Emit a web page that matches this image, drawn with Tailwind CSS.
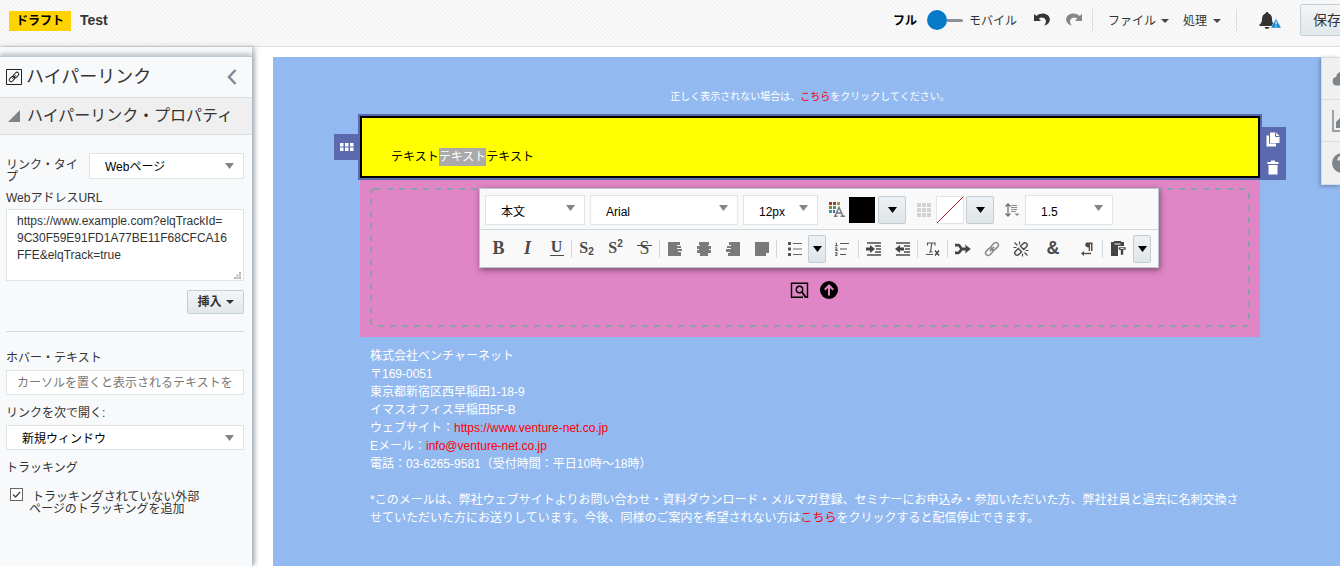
<!DOCTYPE html>
<html lang="ja">
<head>
<meta charset="utf-8">
<title>Test</title>
<script src="https://cdn.jsdelivr.net/npm/@tailwindcss/browser@4"></script>
</head>
<body class="flex h-screen flex-col overflow-hidden bg-white font-['Liberation_Sans','Noto_Sans_CJK_JP',sans-serif] text-xs text-[#333]">

<header class="flex h-[47px] shrink-0 items-center overflow-hidden border-b border-[#d6dfe6] bg-[repeating-linear-gradient(45deg,#fafafa_0px,#fafafa_1px,#f1f1f1_2px,#fafafa_3px)] pl-[9px]">
  <span class="mb-1 flex h-5 w-[62px] shrink-0 items-center justify-center bg-[#ffd200] font-bold text-black">ドラフト</span>
  <h1 class="mb-1.5 ml-[9px] text-sm font-bold">Test</h1>
  <div class="ml-auto flex shrink-0 items-center pb-1.5">
    <label for="view" class="pt-0.5 font-bold text-black">フル</label>
    <button id="view" type="button" aria-label="表示切替" class="ml-2.5 flex w-9 items-center"><span class="size-5 rounded-full bg-[#0679c8]"></span><span class="h-[3px] flex-1 rounded-r bg-[#8b9399]"></span></button>
    <span class="ml-1.5 pt-0.5">モバイル</span>
    <button type="button" aria-label="元に戻す" class="ml-[17px]"><svg class="h-3.5 w-4" viewBox="0 0 16 14"><path d="M0 1v7h7L4.800 5.800C7.200 3.600 11 4.300 11.800 7.500c.4 1.900-.3 3.600-1.600 5C14 11.500 16 9 15.800 6 15.300 1 8-1.800 2.500 3z" fill="#333"/></svg></button>
    <button type="button" aria-label="やり直し" class="ml-4"><svg class="h-3.5 w-4" viewBox="0 0 16 14"><path d="M16 1v7H9l2.200-2.200C8.800 3.600 5 4.300 4.200 7.500c-.4 1.900.3 3.600 1.600 5C2 11.500 0 9 .2 6 .7 1 8-1.800 13.500 3z" fill="#858585"/></svg></button>
    <span class="ml-2.5 h-[22px] w-px bg-[#d6dfe6]"></span>
    <button type="button" class="ml-[15px] flex items-center gap-[5px] pt-0.5">ファイル<svg class="h-1 w-2" viewBox="0 0 8 4"><path d="M0 0h8L4 4z" fill="#444"/></svg></button>
    <button type="button" class="ml-[14px] flex items-center gap-1.5 pt-0.5">処理<svg class="h-1 w-2" viewBox="0 0 8 4"><path d="M0 0h8L4 4z" fill="#444"/></svg></button>
    <span class="ml-[15px] h-[22px] w-px bg-[#d6dfe6]"></span>
    <button type="button" aria-label="通知" class="ml-[22px]"><svg class="h-[17px] w-[22px]" viewBox="0 0 22 17"><path d="M8 0c1 0 1.200.6 1.200 1.200C12 2 13 4.500 13 7c0 3 1 4.500 2.500 5.500v1.500H.5v-1.500C2 11.500 3 10 3 7c0-2.500 1-5 3.800-5.800C6.800.6 7 0 8 0zM5.500 15h5c-.5 2.500-4.500 2.500-5 0z" fill="#333"/><path d="M17 6.500 22.300 16h-10.600z" fill="#0a8ad8" stroke="#fff" stroke-width=".5"/><path d="M16.500 9.500h1.200v3h-1.200zM16.500 13.500h1.200v1.200h-1.200z" fill="#fff"/></svg></button>
    <button type="button" class="-mr-3.5 ml-[19px] h-8 rounded-xs border border-[#c4ced7] bg-linear-to-b from-[#f3f5f6] to-[#e2e7ea] px-3 text-sm">保存</button>
  </div>
</header>

<div class="flex min-h-0 flex-1">
  <aside class="relative z-10 flex w-[253px] shrink-0 flex-col border-r border-[#c4d2de] bg-[#f7f9fb] pt-[9px] shadow-[2px_0_5px_rgba(0,0,0,0.25)]">
    <div class="flex flex-1 flex-col border-t border-[#bccad6] bg-[#f8f9fb] shadow-[0_-2px_5px_rgba(0,0,0,0.25)]">
      <div class="flex h-10 items-center pl-1.5 pr-[15px]">
        <svg class="size-4" viewBox="0 0 16 16" fill="none" stroke="#222"><path d="M.5.5h15v15H.5z"/><g transform="rotate(-45 8 8)"><rect x="2" y="6.200" width="6.500" height="3.600" rx="1.800"/><rect x="7.500" y="6.200" width="6.500" height="3.600" rx="1.800"/><path d="M5.500 8h5"/></g></svg>
        <h2 class="ml-1 text-lg leading-6">ハイパーリンク</h2>
        <button type="button" aria-label="閉じる" class="ml-auto"><svg class="h-4 w-2.5" viewBox="0 0 10 16" fill="none" stroke="#7e8a94" stroke-width="2.500"><path d="M8.500 1 2 8l6.500 7"/></svg></button>
      </div>
      <button type="button" class="flex h-[38px] shrink-0 items-center border-y border-[#d6dfe6] bg-[#efefef] pl-2 text-base">
        <svg class="mr-[7px] h-3 w-3" viewBox="0 0 12 12"><path d="M12 0v12H0z" fill="#7d8489"/></svg>ハイパーリンク・プロパティ
      </button>

      <div class="flex flex-col pl-1.5 pr-2 pt-[18px]">
        <div class="flex h-[26px]">
          <label for="type" class="w-[83px] shrink-0 break-all pr-2 pt-1.5 leading-3">リンク・タイプ</label>
          <div class="relative flex-1">
            <select id="type" class="block h-[26px] w-full appearance-none border border-[#dfe4e7] bg-white pl-[15px] pt-0.5 text-black"><option>Webページ</option></select>
            <svg class="pointer-events-none absolute right-2.5 top-2.5 h-1.5 w-[9px]" viewBox="0 0 9 6"><path d="M0 0h9L4.500 6z" fill="#80868b"/></svg>
          </div>
        </div>
        <label for="url" class="mt-2.5 leading-[18px]">WebアドレスURL</label>
        <div class="relative mt-0.5 flex">
          <textarea id="url" class="h-[72px] w-full resize-none overflow-hidden border border-[#dfe4e7] bg-white px-2.5 py-[3px] leading-[17px]">https://www.example.com?elqTrackId=
9C30F59E91FD1A77BE11F68CFCA16
FFE&amp;elqTrack=true</textarea>
          <svg class="pointer-events-none absolute bottom-0.5 right-[3px] size-[7px]" viewBox="0 0 7 7" fill="#b5b5b5"><path d="M0 5h2v2H0zM2.500 5h2v2h-2zM5 5h2v2H5zM2.500 2.500h2v2h-2zM5 2.500h2v2H5zM5 0h2v2H5z"/></svg>
        </div>
        <button type="button" class="mt-[9px] flex h-6 w-[57px] items-center justify-center gap-1 self-end rounded-xs border border-[#c4ced7] bg-linear-to-b from-[#f3f5f6] to-[#e2e7ea] font-bold">挿入<svg class="h-1 w-2" viewBox="0 0 8 4"><path d="M0 0h8L4 4z" fill="#333"/></svg></button>
        <hr class="mt-[17px] border-[#d5dade]">
        <label for="hover" class="mt-[17px] leading-[18px]">ホバー・テキスト</label>
        <input id="hover" type="text" placeholder="カーソルを置くと表示されるテキストを" class="mt-[3px] h-[25px] w-full border border-[#dfe4e7] bg-white px-2.5 placeholder:text-[#777]">
        <label for="open" class="mt-[9px] leading-[18px]">リンクを次で開く:</label>
        <div class="relative mt-[3px]">
          <select id="open" class="block h-[25px] w-full appearance-none border border-[#dfe4e7] bg-white pl-[15px] pt-0.5 text-black"><option>新規ウィンドウ</option></select>
          <svg class="pointer-events-none absolute right-2.5 top-2.5 h-1.5 w-[9px]" viewBox="0 0 9 6"><path d="M0 0h9L4.500 6z" fill="#80868b"/></svg>
        </div>
        <span class="mt-[9px] leading-[18px]">トラッキング</span>
        <div class="mt-[11px] flex pl-1">
          <span class="relative size-[13px]">
            <input id="track" type="checkbox" checked class="block size-[13px] appearance-none border border-[#666] bg-white">
            <svg class="pointer-events-none absolute left-0 top-0 size-[13px]" viewBox="0 0 13 13" fill="none" stroke="#444" stroke-width="1.300"><path d="m3 6.500 2.500 2.500L10.200 4"/></svg>
          </span>
          <label for="track" class="ml-1.5 pt-[3px] indent-[3px] leading-3">トラッキングされていない外部<br>ページのトラッキングを追加</label>
        </div>
      </div>
    </div>
  </aside>

  <main class="relative min-w-0 flex-1 overflow-hidden pl-5 pt-2.5">
    <div class="-mr-[7px] h-full bg-[#92b9f0] pt-[31px]">
      <div class="mx-auto w-[900px] max-w-full">
        <p class="text-center text-[10px] leading-[18px] text-white">正しく表示されない場合は、<a href="#" class="text-[#f00]">こちら</a>をクリックしてください。</p>

        <section class="relative z-10 mt-2.5 border-2 border-black bg-[#ff0] px-[29px] pb-2.5 pt-[30px] text-black outline-2 outline-[#5b6aae]">
          <p class="leading-[18px]">テキスト<mark class="inline-block bg-[#aaa] text-white">テキスト</mark>テキスト</p>
          <button type="button" aria-label="移動" class="absolute -left-7 top-4 flex h-[26px] w-[26px] items-center justify-center bg-[#5b6aae]"><svg class="h-2 w-3.5" viewBox="0 0 14 8" fill="#fff"><path d="M0 0h3.500v3.500H0zM5 0h3.500v3.500H5zM10 0h3.500v3.500H10zM0 4.500h3.500V8H0zM5 4.500h3.500V8H5zM10 4.500h3.500V8H10z"/></svg></button>
          <div class="absolute -right-7 -bottom-1 flex h-[53px] w-[26px] flex-col items-center justify-between bg-[#5b6aae] py-[5px]">
            <button type="button" aria-label="複製"><svg class="block h-[15px] w-3.5" viewBox="0 0 14 15"><path d="M.5 3.500H3v8h7v3H.5z" fill="#fff"/><path d="M4 .5h6L13.500 4v7H4z" fill="#fff"/><path d="M9.500.5V4.500h4" fill="none" stroke="#5b6aae"/></svg></button>
            <button type="button" aria-label="削除"><svg class="block h-[15px] w-3" viewBox="0 0 12 15" fill="#fff"><path d="M.5 2h3.500V.5h4V2h3.500v2H.5zM1.500 5h9v9.500h-9z"/></svg></button>
          </div>
        </section>

        <section class="relative h-[159px] bg-[#e085c5] px-2.5 pb-2.5 pt-2.5">
          <div class="relative flex h-full items-end justify-center pb-7 pl-2">
            <svg class="absolute inset-0 h-full w-full" fill="none" stroke="#8d9fa9" stroke-width="2" stroke-dasharray="6 6"><rect x="1" y="1" rx="4" class="h-[calc(100%-2px)] w-[calc(100%-2px)]"/></svg>
            <div class="relative flex items-center gap-[11px]">
              <button type="button" aria-label="参照"><svg class="block h-[17px] w-[19px]" viewBox="0 0 19 17" fill="none" stroke="#000" stroke-width="1.400"><path d="M13 15.300H1.500V1.300h16v14H16"/><circle cx="9.500" cy="7.500" r="3.200"/><path d="m11.800 9.800 4 5.700" stroke-width="2"/></svg></button>
              <button type="button" aria-label="アップロード"><svg class="block size-[18px]" viewBox="0 0 18 18"><circle cx="9" cy="9" r="9"/><path d="M9 14.500V5M4.800 8.800 9 4.500l4.200 4.300" fill="none" stroke="#e085c5" stroke-width="2"/></svg></button>
            </div>
          </div>

          <div role="toolbar" aria-label="書式" class="absolute left-[119px] top-2.5 z-20 w-[680px] border border-[#b9c8d4] bg-[#f9f9f9] shadow-[1px_2px_6px_rgba(0,0,0,0.45)]">
            <div class="flex h-10 items-center pl-[5px] pt-px">
              <div class="relative w-[100px]"><select aria-label="段落" class="block h-[30px] w-full appearance-none border border-[#dfe4e7] bg-white pl-[15px] pt-1 text-black"><option>本文</option></select><svg class="pointer-events-none absolute right-2.5 top-2.5 h-1.5 w-[9px]" viewBox="0 0 9 6"><path d="M0 0h9L4.500 6z" fill="#80868b"/></svg></div>
              <div class="relative ml-[5px] w-[148px]"><select aria-label="フォント" class="block h-[30px] w-full appearance-none border border-[#dfe4e7] bg-white pl-[15px] pt-1 text-black"><option>Arial</option></select><svg class="pointer-events-none absolute right-2.5 top-2.5 h-1.5 w-[9px]" viewBox="0 0 9 6"><path d="M0 0h9L4.500 6z" fill="#80868b"/></svg></div>
              <div class="relative ml-[5px] w-[75px]"><select aria-label="サイズ" class="block h-[30px] w-full appearance-none border border-[#dfe4e7] bg-white pl-[15px] pt-1 text-black"><option>12px</option></select><svg class="pointer-events-none absolute right-2.5 top-2.5 h-1.5 w-[9px]" viewBox="0 0 9 6"><path d="M0 0h9L4.500 6z" fill="#80868b"/></svg></div>
              <svg class="ml-[11px] h-[15px] w-4" viewBox="0 0 16 15"><path d="M0 0h3v3H0z" fill="#a33"/><path d="M4 0h3v3H4z" fill="#a33b33"/><path d="M8 0h3v3H8z" fill="#9a9a3c"/><path d="M0 4h3v3H0z" fill="#7a8a30"/><path d="M4 4h3v3H4z" fill="#4f9a3c"/><path d="M0 8h3v3H0z" fill="#3a9aa0"/><path d="M4 8h2v3H4z" fill="#37b"/><path d="m6 14 4-8.500L14 14M7.500 11h5M5 14.300h3.500M11.500 14.300H16" fill="none" stroke="#777" stroke-width="1.400"/></svg>
              <button type="button" aria-label="文字色" class="ml-1 size-[26px] bg-black"></button>
              <button type="button" aria-label="文字色を選択" class="ml-[3px] flex h-7 w-7 items-center justify-center rounded-xs border border-[#c0ccd6] bg-linear-to-b from-[#eef1f3] to-[#e0e5e8]"><svg class="h-1.5 w-[9px]" viewBox="0 0 10 6" preserveAspectRatio="none"><path d="M0 0h10L5 6z"/></svg></button>
              <svg class="ml-[11px] h-3.5 w-3.5" viewBox="0 0 14 14" fill="#d3d3d3"><path d="M0 0h4v4H0zM5 0h4v4H5zM10 0h4v4h-4zM0 5h4v4H0zM5 5h4v4H5zM10 5h4v4h-4zM0 10h4v4H0zM5 10h4v4H5zM10 10h4v4h-4z"/></svg>
              <button type="button" aria-label="背景色" class="ml-[5px] size-7 border border-[#dfe4e7] bg-white"><svg class="block size-full" viewBox="0 0 26 26"><path d="M0 26 26 0" stroke="#d0112b"/></svg></button>
              <button type="button" aria-label="背景色を選択" class="ml-0.5 flex h-7 w-7 items-center justify-center rounded-xs border border-[#c0ccd6] bg-linear-to-b from-[#eef1f3] to-[#e0e5e8]"><svg class="h-1.5 w-[9px]" viewBox="0 0 10 6" preserveAspectRatio="none"><path d="M0 0h10L5 6z"/></svg></button>
              <svg class="ml-[11px] h-3.5 w-3.5" viewBox="0 0 14 14"><path d="M3 2v10M.5 3.500 3 1l2.500 2.500M.5 10.500 3 13l2.500-2.500" fill="none" stroke="#707070" stroke-width="1.300"/><path d="M6 2.500h6M6 4.500h6M6 6.500h6M6 8.500h5" stroke="#8a8a8a"/><path d="M9.500 10.500h5L12 13z" fill="#888"/></svg>
              <div class="relative ml-1.5 w-[88px]"><select aria-label="行の高さ" class="block h-[30px] w-full appearance-none border border-[#dfe4e7] bg-white pl-[15px] pt-1 text-black"><option>1.5</option></select><svg class="pointer-events-none absolute right-2.5 top-2.5 h-1.5 w-[9px]" viewBox="0 0 9 6"><path d="M0 0h9L4.500 6z" fill="#80868b"/></svg></div>
            </div>

            <div class="flex h-[38px] items-center border-t border-[#cfd9e1] pl-1 font-['Liberation_Serif'] text-lg font-bold leading-6 text-[#4a4a4a]">
              <button type="button" class="w-[29px] pb-0.5">B</button>
              <button type="button" class="w-[29px] pb-0.5 italic">I</button>
              <button type="button" aria-label="下線" class="flex w-[29px] justify-center"><span class="h-[15px] w-3.5 border-b border-[#4a4a4a] text-center text-base leading-3">U</span></button>
              <span class="h-[18px] w-px bg-[#cfd9e1]"></span>
              <button type="button" class="w-[29px] whitespace-nowrap pb-0.5 text-base">S<span class="align-[-2px] font-['Liberation_Sans'] text-[10px] leading-none">2</span></button>
              <button type="button" class="w-[29px] whitespace-nowrap pb-0.5 text-base">S<span class="align-[6px] font-['Liberation_Sans'] text-[10px] leading-none">2</span></button>
              <button type="button" aria-label="取り消し線" class="flex w-[29px] justify-center"><span class="relative pb-0.5 text-lg font-normal">S<span class="absolute -left-0.5 -right-0.5 top-[11px] h-px bg-[#4a4a4a]"></span></span></button>
              <span class="h-[18px] w-px bg-[#cfd9e1]"></span>
              <button type="button" aria-label="左揃え" class="flex w-[29px] justify-center"><svg class="size-3.5" viewBox="0 0 14 14" fill="#7a7a7a"><path d="M0 0h12v3H9v1h4v2H9v1h5v2h-4v1h3v4H0z"/></svg></button>
              <button type="button" aria-label="中央揃え" class="flex w-[29px] justify-center"><svg class="size-3.5" viewBox="0 0 14 14" fill="#7a7a7a"><path d="M2 0h10v3h-1v1h3v3h-2v1h2v3h-3v3H3v-3H0V8h2V7H0V4h3V3H2z"/></svg></button>
              <button type="button" aria-label="右揃え" class="flex w-[29px] justify-center"><svg class="size-3.5" viewBox="0 0 14 14" fill="#7a7a7a"><path d="M14 0H3v3h2v1H1v2h4v1H0v3h4v1H2v3h12z"/></svg></button>
              <button type="button" aria-label="両端揃え" class="flex w-[29px] justify-center"><svg class="size-3.5" viewBox="0 0 14 14" fill="#7a7a7a"><path d="M0 0h14v11h-3v3H0z"/></svg></button>
              <span class="h-[18px] w-px bg-[#cfd9e1]"></span>
              <button type="button" aria-label="箇条書き" class="flex w-[31px] justify-end pr-1.5"><svg class="size-3.5" viewBox="0 0 14 14"><path d="M5 1.500h9M5 7h9M5 12.500h9" stroke="#666"/><path d="M0 0h3v3H0zM0 5.500h3v3H0zM0 11h3v3H0z" fill="#555"/></svg></button>
              <button type="button" aria-label="箇条書きの種類" class="flex h-7 w-[18px] items-center justify-center rounded-xs border border-[#c0ccd6] bg-linear-to-b from-[#eef1f3] to-[#e0e5e8]"><svg class="h-1.5 w-[9px]" viewBox="0 0 10 6" preserveAspectRatio="none"><path d="M0 0h10L5 6z"/></svg></button>
              <button type="button" aria-label="番号付きリスト" class="flex w-8 justify-center"><svg class="size-3.5" viewBox="0 0 14 14" fill="none" stroke="#555"><path d="M5 1.500h9M5 7h7M5 12.500h6"/><path d="M.5 1h1v3M0 3.700h3M0 5.800h2v1.500H.5v1.200H3M0 10.500h2v3H0M.5 12H2" stroke-width=".9"/></svg></button>
              <span class="h-[18px] w-px bg-[#cfd9e1]"></span>
              <button type="button" aria-label="インデント" class="flex w-[29px] justify-center"><svg class="h-3.5 w-4" viewBox="0 0 16 14"><path d="M1 1h14M9 4h6M10 7h5M9 10h6M1 13h14" stroke="#777" stroke-width="1.800"/><path d="M0 5.500h4V3l5 4-5 4V8.500H0z" fill="#444"/></svg></button>
              <button type="button" aria-label="インデント解除" class="flex w-[29px] justify-center"><svg class="h-3.5 w-4" viewBox="0 0 16 14"><path d="M1 1h14M9 4h6M10 7h5M9 10h6M1 13h14" stroke="#777" stroke-width="1.800"/><path d="M9 5.500H5V3L0 7l5 4V8.500h4z" fill="#444"/></svg></button>
              <span class="h-[18px] w-px bg-[#cfd9e1]"></span>
              <button type="button" aria-label="書式のクリア" class="flex w-[29px] justify-center"><svg class="h-3.5 w-3.5" viewBox="0 0 14 14" fill="none" stroke="#555"><path d="M1.500 3.500V1h7.500v2.500M5.800 1 4.500 10M3 10h3.500M0 12.500h7" stroke-width="1.200"/><path d="m9 8.500 4 5M13 8.500l-4 5" stroke="#444" stroke-width="1.400"/></svg></button>
              <span class="h-[18px] w-px bg-[#cfd9e1]"></span>
              <button type="button" aria-label="差込み" class="flex w-[29px] justify-center"><svg class="h-3 w-4" viewBox="0 0 16 12"><path d="M0 2.200h3.500c1.500 0 2 3.800 4 3.800H13M0 9.800h3.500c1.500 0 2-3.800 4-3.800" fill="none" stroke="#444" stroke-width="2.800"/><path d="m10 1.500 5.800 4.500-5.800 4.500 1-4.500z" fill="#444"/></svg></button>
              <button type="button" aria-label="リンク" class="flex w-[29px] justify-center"><svg class="size-4" viewBox="0 0 16 16" fill="none" stroke="#8a8a8a" stroke-width="1.500"><g transform="rotate(-45 8 8)"><rect x="0" y="5.500" width="8.500" height="5" rx="2.500"/><rect x="7.500" y="5.500" width="8.500" height="5" rx="2.500"/><path d="M5 8h6"/></g></svg></button>
              <button type="button" aria-label="リンク解除" class="flex w-[29px] justify-center"><svg class="size-4" viewBox="0 0 16 16" fill="none" stroke="#4a4a4a" stroke-width="1.400"><g transform="rotate(-45 8 8)"><path d="M6.500 5.700H2.500a2.300 2.300 0 0 0 0 4.600h4zM9.500 5.700h4a2.300 2.300 0 0 1 0 4.600h-4z"/></g><path d="M1.500 1.500l3 3M6.500.5V3.500M.5 6.500H3.500M14.500 14.500l-3-3M9.500 15.500V12.500M15.500 9.500H12.500" stroke-width="1.200"/></svg></button>
              <button type="button" class="w-9 pb-0.5 font-['Liberation_Sans']">&amp;</button>
              <button type="button" aria-label="段落方向" class="flex w-[31px] justify-center"><svg class="h-3.5 w-3.5" viewBox="0 0 14 14"><path d="M7 .5h5.500V9H11V2h-1v7H8.700V5.500C4.500 5.500 4.500.5 7 .5z" fill="#4a4a4a"/><path d="M3 11.500h8" stroke="#4a4a4a" stroke-width="1.400"/><path d="M4 9v5L1 11.500z" fill="#4a4a4a"/></svg></button>
              <span class="h-[18px] w-px bg-[#cfd9e1]"></span>
              <button type="button" aria-label="貼り付け" class="flex w-[30px] justify-center"><svg class="size-[15px]" viewBox="0 0 15 15"><path d="M0 1h3V0h7v1h3v4H7v10H0z" fill="#444"/><path d="M3.500 3h6" stroke="#f9f9f9"/><path d="M7.500 6H15v3h-2.500v5h-3V9h-2z" fill="#444" stroke="#f9f9f9" stroke-width=".6"/><path d="M9.300 7.500h4" stroke="#f9f9f9" stroke-width=".8"/></svg></button>
              <button type="button" aria-label="貼り付けオプション" class="flex h-7 w-[18px] items-center justify-center rounded-xs border border-[#c0ccd6] bg-linear-to-b from-[#eef1f3] to-[#e0e5e8]"><svg class="h-1.5 w-[9px]" viewBox="0 0 10 6" preserveAspectRatio="none"><path d="M0 0h10L5 6z"/></svg></button>
            </div>
          </div>
        </section>

        <section class="px-2.5 pt-2.5 leading-[18px] text-white">
          <p>株式会社ベンチャーネット<br>〒169-0051<br>東京都新宿区西早稲田1-18-9<br>イマスオフィス早稲田5F-B<br>ウェブサイト：<a href="#" class="text-[#f00]">https://www.venture-net.co.jp</a><br>Eメール：<a href="#" class="text-[#f00]">info@venture-net.co.jp</a><br>電話：03-6265-9581（受付時間：平日10時～18時）</p>
          <p class="mt-[18px]">*このメールは、弊社ウェブサイトよりお問い合わせ・資料ダウンロード・メルマガ登録、セミナーにお申込み・参加いただいた方、弊社社員と過去に名刺交換させていただいた方にお送りしています。今後、同様のご案内を希望されない方は<a href="#" class="text-[#f00]">こちら</a>をクリックすると配信停止できます。</p>
        </section>
      </div>
    </div>

    <nav aria-label="ツール" class="absolute right-0 top-2.5 w-[19px] divide-y divide-[#d3dde5] overflow-hidden border-y border-l border-[#d3dde5] bg-[#f0f0f0] shadow-[-1px_1px_4px_rgba(0,0,0,0.3)]">
      <button type="button" aria-label="クラウド" class="flex h-[42px] w-[42px] items-center pl-2.5"><svg class="h-[15px] w-[22px]" viewBox="0 0 22 15"><path d="M4.500 14.500a4.300 4.300 0 0 1-.4-8.500C4.500 2.500 7 .5 10.500.5c3.500 0 5.500 2 6 5a4.500 4.500 0 0 1 1 9z" fill="#7f868b"/></svg></button>
      <button type="button" aria-label="レポート" class="flex h-[42px] w-[42px] items-center pl-2.5"><svg class="size-[22px]" viewBox="0 0 22 22"><path d="M1 0v21h21" fill="none" stroke="#7f868b" stroke-width="1.500"/><path d="M4 18v-6l8-8 4 6 5-4v12z" fill="#7f868b"/></svg></button>
      <button type="button" aria-label="ヘルプ" class="flex h-[42px] w-[42px] items-center pl-2.5"><svg class="size-5" viewBox="0 0 20 20"><circle cx="10" cy="10" r="10" fill="#7f868b"/><path d="M6.500 7.500c0-4.500 7-4.500 7-.3 0 2.500-3.500 2.500-3.500 5M10 14v2.500" fill="none" stroke="#f0f0f0" stroke-width="2.200"/></svg></button>
    </nav>
  </main>
</div>
</body>
</html>
